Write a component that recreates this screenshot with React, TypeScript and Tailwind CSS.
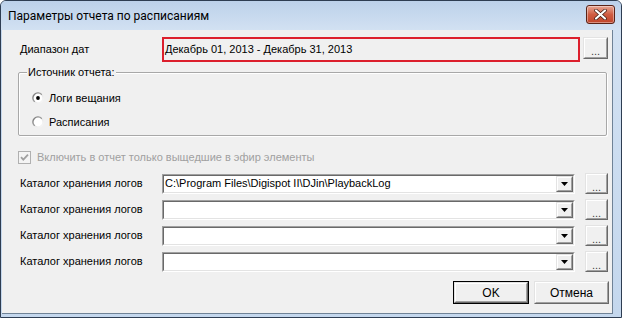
import React from "react";

function Raised({ className = "", children, def = false }: { className?: string; children?: React.ReactNode; def?: boolean }) {
  const inner = (
    <div className="h-full w-full border border-t-[#e3e3e3] border-l-[#e3e3e3] border-r-[#696969] border-b-[#696969]">
      <div className="h-full w-full border border-t-white border-l-white border-r-[#a0a0a0] border-b-[#a0a0a0] bg-[#f0f0f0] flex items-center justify-center">
        {children}
      </div>
    </div>
  );
  if (def) {
    return <div className={`border border-black ${className}`}>{inner}</div>;
  }
  return <div className={className}>{inner}</div>;
}

function Sunken({ className = "", children }: { className?: string; children?: React.ReactNode }) {
  return (
    <div className={`border border-t-[#a0a0a0] border-l-[#a0a0a0] border-r-white border-b-white ${className}`}>
      <div className="h-full w-full border border-t-[#696969] border-l-[#696969] border-r-[#e3e3e3] border-b-[#e3e3e3] bg-white flex items-center">
        {children}
      </div>
    </div>
  );
}

function Dots() {
  return <span className="text-[11px] leading-none text-[#444] mt-[7px]">...</span>;
}

function Combo({ value }: { value?: string }) {
  return (
    <div className="flex items-center">
      <div className="w-[144px] pl-[2px] text-black">Каталог хранения логов</div>
      <Sunken className="w-[413px] h-[20px]">
        <div className="flex-1 pl-[1px] truncate text-black">{value ?? ""}</div>
        <Raised className="w-[17px] h-[16px]">
          <svg width="7" height="4" viewBox="0 0 7 4">
            <path d="M0 0h7L3.5 4z" fill="#000" />
          </svg>
        </Raised>
      </Sunken>
      <Raised className="w-[23px] h-[21px] ml-[10px]">
        <Dots />
      </Raised>
    </div>
  );
}

function Radio({ checked }: { checked?: boolean }) {
  return (
    <svg width="12" height="12" viewBox="0 0 12 12">
      <defs>
        <linearGradient id="rg" x1="0" y1="0" x2="1" y2="1">
          <stop offset="0" stopColor="#707070" />
          <stop offset="0.5" stopColor="#a0a0a0" />
          <stop offset="0.51" stopColor="#e3e3e3" />
          <stop offset="1" stopColor="#ffffff" />
        </linearGradient>
      </defs>
      <circle cx="6" cy="6" r="5.8" fill="url(#rg)" />
      <circle cx="6" cy="6" r="4.4" fill="#fff" />
      {checked && <circle cx="6" cy="6" r="1.9" fill="#000" />}
    </svg>
  );
}

export default function App() {
  return (
    <div className="w-[622px] h-[318px] overflow-hidden bg-white">
      <div className="w-[622px] h-[318px] flex flex-col border border-[#2e3d52] rounded-t-[6px] overflow-hidden bg-[#c4d7ed] font-['Liberation_Sans',Arial,sans-serif] text-[11px] leading-none">
        {/* Title bar */}
        <div className="h-[29px] flex items-center pl-[7px] pr-[6px] bg-gradient-to-b from-[#bcd1ea] to-[#d2e1f2]">
          <div className="flex-1 text-[12px] text-black font-['Roboto',sans-serif]">Параметры отчета по расписаниям</div>
          <div className="w-[29px] h-[19px] mt-[-2px] rounded-[3px] border border-[#5a2216] bg-gradient-to-b from-[#e6a593] via-[#cf5c42] to-[#c0442a] flex items-center justify-center shadow-[inset_0_0_0_1px_rgba(255,255,255,0.4)]">
            <svg width="13" height="11" viewBox="0 0 13 11">
              <path d="M2 1.5 L11 9.5 M11 1.5 L2 9.5" stroke="#3a1a12" strokeWidth="3.6" strokeLinecap="round" />
              <path d="M2 1.5 L11 9.5 M11 1.5 L2 9.5" stroke="#ffffff" strokeWidth="2.2" strokeLinecap="round" />
            </svg>
          </div>
        </div>
        {/* Body */}
        <div className="flex-1 flex pl-[1px]">
          <div className="flex-1 flex flex-col">
            <div className="flex-1 bg-[#f0f0f0] border-r border-r-[#6f8296] flex flex-col pl-[16px] pr-[3px] pt-[7px] text-black">
              {/* Date row */}
              <div className="flex items-start">
                <div className="w-[144px] pl-[2px] h-[25px] flex items-center">Диапазон дат</div>
                <div className="w-[418px] h-[25px] border-2 border-[#dc1f2c] flex items-center pl-[1px]">
                  Декабрь 01, 2013 - Декабрь 31, 2013
                </div>
                <Raised className="w-[25px] h-[22px] ml-[3px]">
                  <Dots />
                </Raised>
              </div>
              {/* Group box */}
              <div className="relative mt-[10px] w-[589px] h-[64px] border border-[#a8a8a8] rounded-[2px] shadow-[inset_1px_1px_0_#ffffff,1px_1px_0_#ffffff]">
                <div className="absolute left-[8px] top-[-6px] bg-[#f0f0f0] px-[1px]">Источник отчета:</div>
                <div className="absolute left-[13px] top-[19px] flex items-center">
                  <Radio checked />
                  <span className="ml-[5px]">Логи вещания</span>
                </div>
                <div className="absolute left-[13px] top-[43px] flex items-center">
                  <Radio />
                  <span className="ml-[5px]">Расписания</span>
                </div>
              </div>
              {/* Checkbox */}
              <div className="mt-[15px] h-[13px] flex items-center">
                <svg width="13" height="13" viewBox="0 0 13 13">
                  <rect x="0.5" y="0.5" width="12" height="12" fill="#f4f4f4" stroke="#b0b0b0" />
                  <path d="M3 6.2 L5.3 8.6 L10 3.6" stroke="#a0a0a0" strokeWidth="1.8" fill="none" />
                </svg>
                <span className="ml-[6px] text-[#a0a0a0]">Включить в отчет только выщедшие в эфир элементы</span>
              </div>
              {/* Combos */}
              <div className="mt-[9px] flex flex-col gap-[5px]">
                <Combo value="C:\Program Files\Digispot II\DJin\PlaybackLog" />
                <Combo />
                <Combo />
                <Combo />
              </div>
              {/* Buttons */}
              <div className="mt-[9px] flex justify-end gap-[5px]">
                <Raised def className="w-[76px] h-[23px]">
                  <span className="text-[12px]">OK</span>
                </Raised>
                <Raised className="w-[75px] h-[23px]">
                  <span className="text-[12px]">Отмена</span>
                </Raised>
              </div>
            </div>
            <div className="h-[1px] bg-[#6f8296]" />
          </div>
          <div className="w-[8px] bg-gradient-to-b from-[#d2e1f2] to-[#c4d7ed]" />
        </div>
        <div className="h-[3px] bg-[#c4d7ed]" />
      </div>
    </div>
  );
}
